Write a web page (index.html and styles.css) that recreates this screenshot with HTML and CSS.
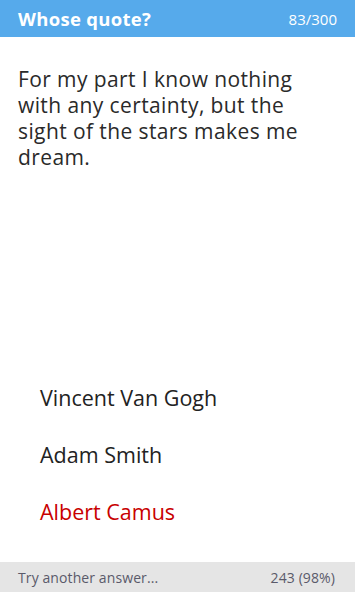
FILE: index.html
```html
<!DOCTYPE html>
<html>
<head>
<meta charset="utf-8">
<link rel="stylesheet" href="styles.css">
</head>
<body>
<div class="app">
  <header class="bar">
    <span class="title">Whose quote?</span>
    <span class="count">83/300</span>
  </header>
  <main class="content">
    <p class="quote">For my part I know nothing with any certainty, but the sight of the stars makes me dream.</p>
    <ul class="answers">
      <li class="answer">Vincent Van Gogh</li>
      <li class="answer">Adam Smith</li>
      <li class="answer wrong">Albert Camus</li>
    </ul>
  </main>
  <footer class="status">
    <span>Try another answer...</span>
    <span>243 (98%)</span>
  </footer>
</div>
</body>
</html>
```

FILE: styles.css
```css
html, body {
  margin: 0;
  padding: 0;
}
body {
  font-family: "Open Sans", "Noto Sans", sans-serif;
  background: #fff;
}
.app {
  width: 355px;
  height: 592px;
  display: flex;
  flex-direction: column;
}
.bar {
  height: 37px;
  background: #56aaeb;
  color: #fff;
  display: flex;
  align-items: center;
  justify-content: space-between;
  padding: 0 18px;
  box-sizing: border-box;
}
.title {
  font-weight: 700;
  font-size: 18.5px;
  letter-spacing: 0.3px;
}
.count {
  font-size: 15px;
}
.content {
  flex: 1;
  display: flex;
  flex-direction: column;
  justify-content: space-between;
  padding: 29px 18px 0;
}
.quote {
  margin: 0;
  font-size: 21px;
  letter-spacing: 0.4px;
  line-height: 26px;
  color: #2a2a2a;
}
.answers {
  list-style: none;
  margin: 0 0 36px;
  padding: 0 0 0 22px;
  display: flex;
  flex-direction: column;
  gap: 28px;
}
.answer {
  font-size: 21.5px;
  line-height: 29px;
  color: #222;
}
.answer.wrong {
  color: #c80000;
}
.status {
  height: 30px;
  background: #e5e5e5;
  color: #5a5a6a;
  font-size: 14px;
  letter-spacing: 0.1px;
  display: flex;
  align-items: center;
  justify-content: space-between;
  padding: 0 20px 0 18px;
  box-sizing: border-box;
}
```
